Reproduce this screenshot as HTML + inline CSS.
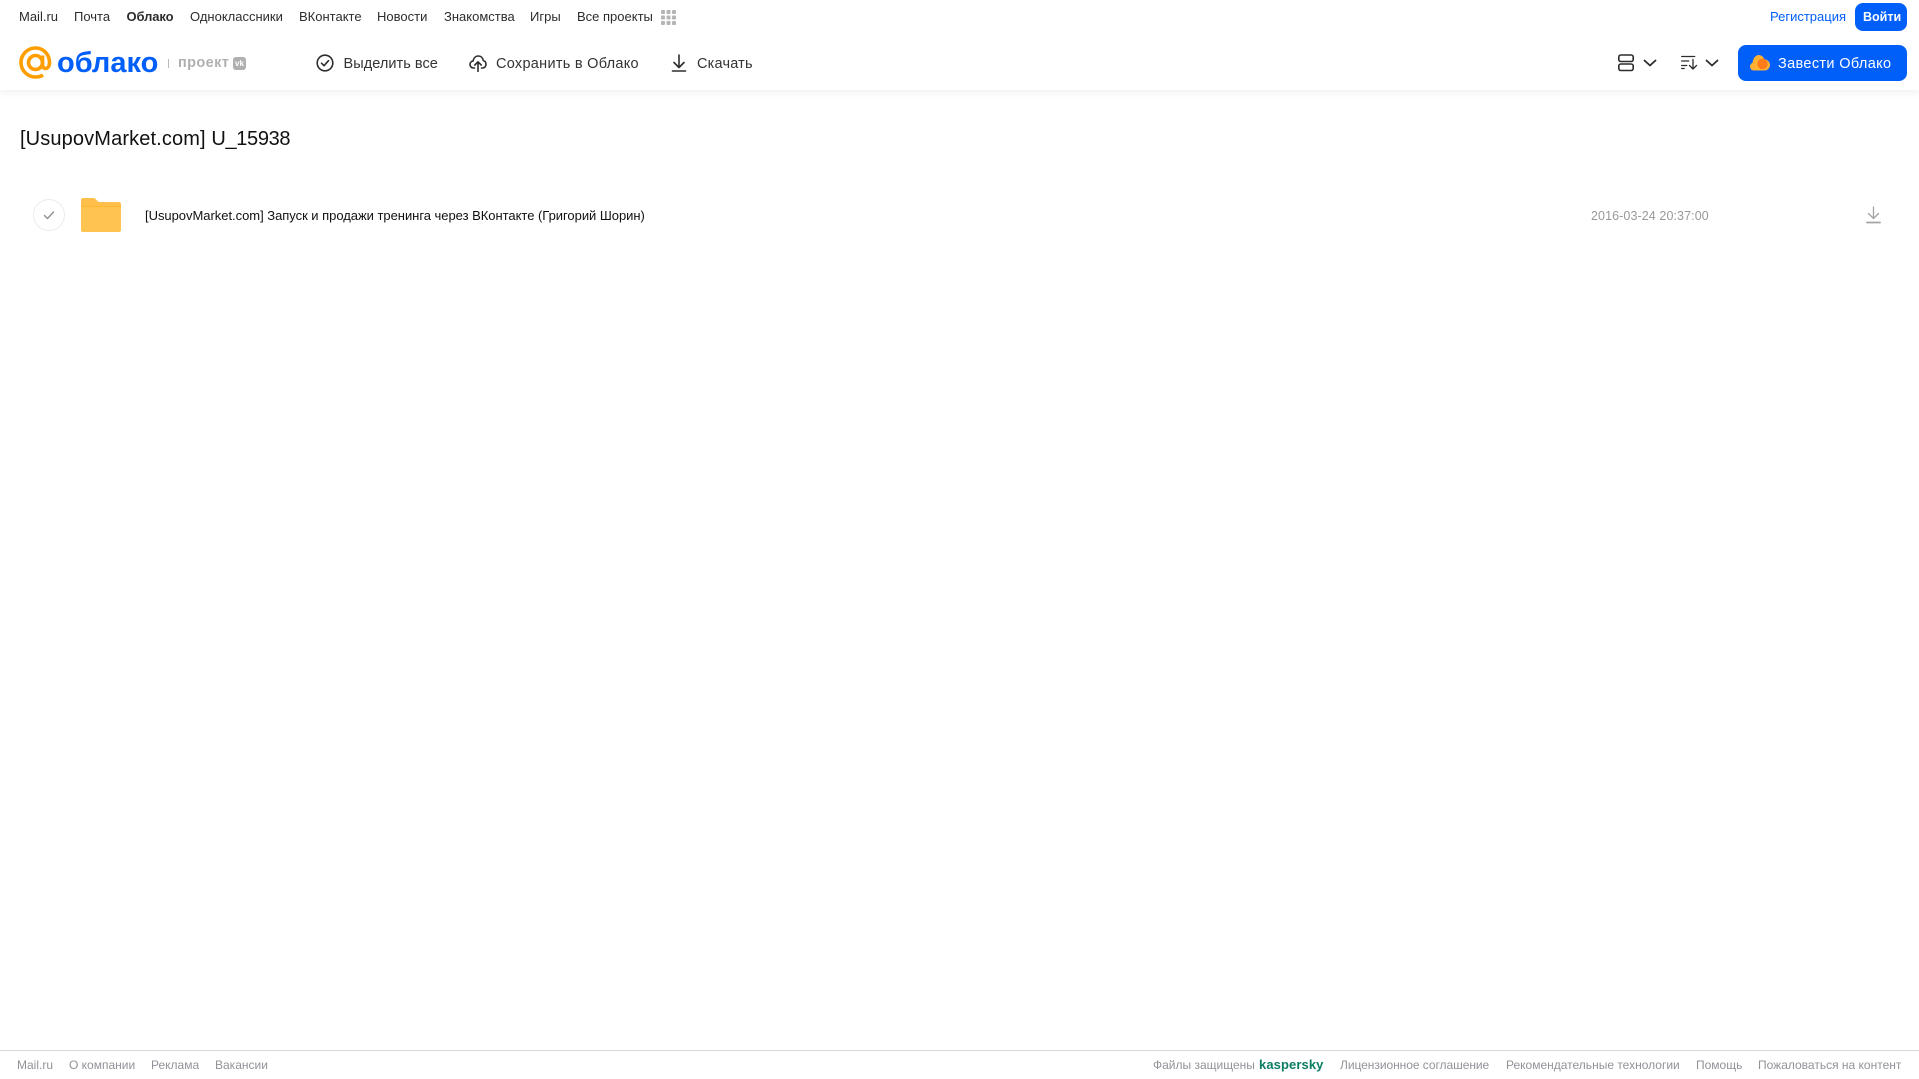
<!DOCTYPE html>
<html lang="ru">
<head>
<meta charset="utf-8">
<title>Облако</title>
<style>
html,body{margin:0;padding:0;background:#fff}
body{width:1919px;height:1079px;position:relative;overflow:hidden;font-family:"Liberation Sans",Arial,sans-serif}
.t{position:absolute;white-space:nowrap;line-height:20px;height:20px}
.n{top:7px;font-size:13px;color:#2c2d2e}
.b{top:54px;font-size:14.5px;color:#333;letter-spacing:.28px}
.f{top:1055px;font-size:12px;color:#919399;letter-spacing:0}
svg{position:absolute;display:block}
#hdr{position:absolute;left:0;top:0;width:1919px;height:90px;background:#fff;box-shadow:0 2px 8px rgba(0,0,0,.07)}
#line{position:absolute;left:0;top:1050px;width:1919px;height:1px;background:#d8d8d8}
.btn{position:absolute;background:#005ff9;border-radius:8px}
</style>
</head>
<body>
<div id="hdr"></div>

<span class="t n" style="left:19px">Mail.ru</span>
<span class="t n" style="left:74px">Почта</span>
<span class="t n" style="left:126.500px;font-weight:bold;letter-spacing:-.1px">Облако</span>
<span class="t n" style="left:190px">Одноклассники</span>
<span class="t n" style="left:299px">ВКонтакте</span>
<span class="t n" style="left:377px">Новости</span>
<span class="t n" style="left:444px">Знакомства</span>
<span class="t n" style="left:530px">Игры</span>
<span class="t n" style="left:577px">Все проекты</span>
<svg style="left:661px;top:10px" width="15" height="15" viewBox="0 0 15 15" fill="#b5b5b5">
<rect x="0" y="0" width="4" height="4" rx="1"/><rect x="5.500" y="0" width="4" height="4" rx="1"/><rect x="11" y="0" width="4" height="4" rx="1"/>
<rect x="0" y="5.500" width="4" height="4" rx="1"/><rect x="5.500" y="5.500" width="4" height="4" rx="1"/><rect x="11" y="5.500" width="4" height="4" rx="1"/>
<rect x="0" y="11" width="4" height="4" rx="1"/><rect x="5.500" y="11" width="4" height="4" rx="1"/><rect x="11" y="11" width="4" height="4" rx="1"/>
</svg>

<span class="t n" style="left:1770px;color:#005ff9">Регистрация</span>
<div class="btn" style="left:1855px;top:3px;width:52px;height:28px"></div>
<span class="t n" style="left:1863px;color:#fff;font-weight:bold;font-size:12.500px">Войти</span>

<!-- logo -->
<svg style="left:19px;top:46px" width="33" height="33" viewBox="0 0 33 33" fill="none" stroke="#ff9e00" stroke-width="3.600">
<circle cx="16.500" cy="16.500" r="7"/>
<path d="M23.500 9.500v9.500c0 5 7 5 7-2.500 0-8-6-14.500-14-14.500S2 8.500 2 16.500 8.500 31 16.500 31c3 0 5.500-.7 7.500-2"/>
</svg>
<span class="t" style="left:57px;top:45px;height:36px;line-height:36px;font-size:29px;font-weight:bold;color:#005ff9">облако</span>
<div style="position:absolute;left:168px;top:59px;width:1px;height:9px;background:#bbb"></div>
<span class="t" style="left:178px;top:53px;font-size:14.500px;font-weight:bold;color:#b0b0b0;letter-spacing:.4px">проект</span>
<div style="position:absolute;left:233px;top:57px;width:13px;height:13px;border-radius:3px;background:#b0b0b0"></div>
<span class="t" style="left:235px;top:58px;height:11px;line-height:11px;font-size:8px;font-weight:bold;color:#fff">vk</span>

<!-- toolbar -->
<svg style="left:316px;top:54px" width="18" height="18" viewBox="0 0 18 18" fill="none" stroke="#2c2d2e" stroke-width="1.600">
<circle cx="9" cy="9" r="7.800"/><path d="M5.500 9.200l2.500 2.500 4.500-5" stroke-linecap="round" stroke-linejoin="round"/>
</svg>
<span class="t b" style="left:343.500px;letter-spacing:.05px">Выделить все</span>

<svg style="left:469px;top:54px" width="18" height="18" viewBox="0 0 18 18" fill="none" stroke="#2c2d2e" stroke-width="1.600" stroke-linecap="round" stroke-linejoin="round">
<path d="M5.500 14H4.500C2.500 14 1 12.500 1 10.500 1 8.700 2.300 7.300 4 7.100 4.500 4.200 6.500 2 9.300 2c2.700 0 4.600 2 5 4.600 1.600.4 2.700 1.900 2.700 3.700 0 2-1.500 3.700-3.500 3.700h-1"/>
<path d="M9 17.500V8M5.800 11L9 7.800l3.200 3.200"/>
</svg>
<span class="t b" style="left:496px">Сохранить в Облако</span>

<svg style="left:671px;top:54px" width="16" height="18" viewBox="0 0 16 18" fill="none" stroke="#2c2d2e" stroke-width="1.600" stroke-linecap="round" stroke-linejoin="round">
<path d="M8 1v12M3 8.500l5 5 5-5M1.500 17h13"/>
</svg>
<span class="t b" style="left:697px;letter-spacing:.2px">Скачать</span>

<svg style="left:1618px;top:54px" width="16" height="18" viewBox="0 0 16 18" fill="none" stroke="#2c2d2e" stroke-width="1.600">
<rect x=".8" y="1" width="14.400" height="6.500" rx="2"/><rect x=".8" y="10" width="14.400" height="6.500" rx="2"/>
</svg>
<svg style="left:1643px;top:59px" width="14" height="9" viewBox="0 0 14 9" fill="none" stroke="#2c2d2e" stroke-width="1.800" stroke-linecap="round" stroke-linejoin="round">
<path d="M1.500 1.500L7 6.500l5.500-5"/>
</svg>
<svg style="left:1681px;top:55px" width="17" height="15" viewBox="0 0 17 15" fill="none" stroke="#2c2d2e" stroke-width="1.300" stroke-linecap="round" stroke-linejoin="round">
<path d="M.7 1.500h13M.7 6h7M.7 10.500h5M.7 13.500h2.500M12 4.500v9.500M8.500 10.500l3.500 3.500 3.500-3.500"/>
</svg>
<svg style="left:1705px;top:59px" width="14" height="9" viewBox="0 0 14 9" fill="none" stroke="#2c2d2e" stroke-width="1.800" stroke-linecap="round" stroke-linejoin="round">
<path d="M1.500 1.500L7 6.500l5.500-5"/>
</svg>

<div class="btn" style="left:1738px;top:45px;width:169px;height:36px"></div>
<svg style="left:1750px;top:54px" width="20" height="17" viewBox="0 0 20 17">
<path d="M4 16.500C1.800 16.500 0 14.700 0 12.500c0-1.800 1-3.200 2.600-3.800C2.900 4.500 5.600 1 8.800 1c2.600 0 4.700 1.800 5.500 4.300 3.200.2 5.700 2.800 5.700 5.700 0 3-2.500 5.500-5.500 5.500z" fill="#ffb133"/>
<circle cx="12.500" cy="10" r="5.200" fill="#ff7a1a"/>
</svg>
<span class="t b" style="left:1778px;color:#fff;letter-spacing:.35px">Завести Облако</span>

<!-- title -->
<span class="t" style="left:20px;top:127px;height:24px;line-height:24px;font-size:20px;color:#111"><span style="letter-spacing:.13px">[UsupovMarket.com] </span><span style="letter-spacing:-.35px">U_15938</span></span>

<!-- row -->
<svg style="left:33px;top:199px" width="32" height="32" viewBox="0 0 32 32" fill="none">
<circle cx="16" cy="16" r="15.500" stroke="#ececec"/>
<path d="M11.500 16.500l3 3 6-6.500" stroke="#8f8f8f" stroke-width="1.400" stroke-linecap="round" stroke-linejoin="round"/>
</svg>
<svg style="left:81px;top:198px" width="40" height="34" viewBox="0 0 40 34">
<path d="M2 0h10c2 0 3 1 4 2.500L18 4h20c1 0 2 1 2 2v26c0 1-1 2-2 2H2c-1 0-2-1-2-2V2C0 1 1 0 2 0z" fill="#ffbf4d"/>
<path d="M0 8h40v24c0 1-1 2-2 2H2c-1 0-2-1-2-2z" fill="#ffc34f"/>
<path d="M0 8h40v1H0z" fill="#ffb733"/>
</svg>
<span class="t" style="left:145px;top:206px;font-size:13px;color:#111;letter-spacing:-.03px">[UsupovMarket.com] Запуск и продажи тренинга через ВКонтакте (Григорий Шорин)</span>
<span class="t" style="left:1591px;top:206px;font-size:12.500px;color:#999;letter-spacing:.09px">2016-03-24 20:37:00</span>
<svg style="left:1865.500px;top:206px" width="15" height="18" viewBox="0 0 15 18" fill="none" stroke="#a3a3a3" stroke-width="1.300" stroke-linecap="round" stroke-linejoin="round">
<path d="M7.500 1v11M2.500 7.500l5 5 5-5"/><path d="M1 16.500h13" stroke-width="1.800"/>
</svg>

<!-- footer -->
<div id="line"></div>
<span class="t f" style="left:17px">Mail.ru</span>
<span class="t f" style="left:69px">О компании</span>
<span class="t f" style="left:151px">Реклама</span>
<span class="t f" style="left:215px">Вакансии</span>
<span class="t f" style="left:1153px">Файлы защищены</span>
<span class="t" style="left:1259px;top:1055px;font-size:13px;font-weight:bold;color:#0b7d62;letter-spacing:.1px">kaspersky</span>
<span class="t f" style="left:1340px;letter-spacing:-.05px">Лицензионное соглашение</span>
<span class="t f" style="left:1506px">Рекомендательные технологии</span>
<span class="t f" style="left:1696px">Помощь</span>
<span class="t f" style="left:1758px">Пожаловаться на контент</span>
</body>
</html>
